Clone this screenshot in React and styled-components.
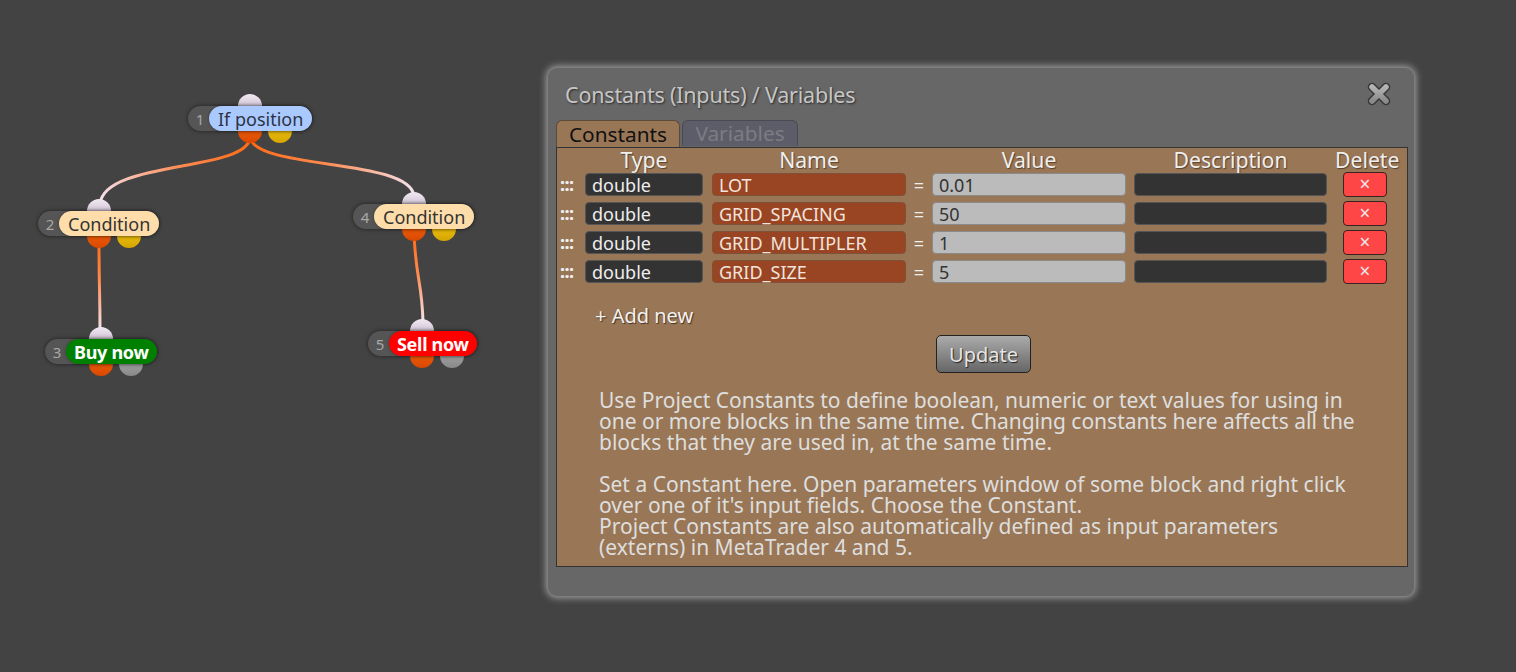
import React from "react";
import styled, { createGlobalStyle } from "styled-components";

const Global = createGlobalStyle`
  html, body { margin: 0; padding: 0; background: #434343; }
  body { font-family: "Noto Sans", "Open Sans", sans-serif; }
  * { box-sizing: border-box; }
`;

const Page = styled.div`
  display: flex;
  width: 1516px;
  height: 672px;
  overflow: hidden;
  background: #434343;
`;

/* ---------- node graph ---------- */
const Canvas = styled.div`
  position: relative;
  flex: 0 0 548px;
  height: 672px;
`;

const Edges = styled.svg`
  position: absolute;
  left: 0;
  top: 0;
  width: 548px;
  height: 672px;
`;

const NodeWrap = styled.div`
  position: absolute;
  left: ${(p) => p.$x}px;
  top: ${(p) => p.$y}px;
  height: 25px;
`;

const Pill = styled.div`
  position: relative;
  z-index: 2;
  display: flex;
  align-items: stretch;
  height: 25px;
  background: #555;
  border-radius: 13px;
  box-shadow: 0 0 4px rgba(0, 0, 0, 0.55);
`;

const Num = styled.span`
  width: 21px;
  padding-left: 3px;
  display: flex;
  align-items: center;
  justify-content: center;
  font-size: 15px;
  color: #a8a8a8;
`;

const Label = styled.span`
  display: flex;
  align-items: center;
  padding: 0 ${(p) => (p.$bold ? 8 : 9)}px;
  border-radius: 13px;
  background: ${(p) => p.$bg};
  color: ${(p) => p.$fg};
  font-size: 18px;
  font-weight: ${(p) => (p.$bold ? 700 : 400)};
  letter-spacing: ${(p) => (p.$bold ? "-0.3px" : "0")};
  white-space: nowrap;
  box-shadow: 0 0 3px rgba(0, 0, 0, 0.35);
`;

const Port = styled.span`
  position: absolute;
  z-index: 1;
  width: 24px;
  height: 24px;
  border-radius: 50%;
  left: calc(50% - 12px + ${(p) => p.$dx}px);
  top: ${(p) => (p.$top ? -12 : 13)}px;
  background: ${(p) => p.$bg};
`;

const portColors = {
  in: "linear-gradient(#f2e8f2, #b4a4bc)",
  orange: "linear-gradient(#ff6a10, #d84800)",
  yellow: "linear-gradient(#ffd21a, #d4a400)",
  gray: "linear-gradient(#b6b6b6, #888)",
};

const nodes = [
  { n: 1, label: "If position", x: 188, y: 106, bg: "#a9c9ff", fg: "#2c3344", second: "yellow" },
  { n: 2, label: "Condition", x: 38, y: 211, bg: "#ffddaa", fg: "#333", second: "yellow" },
  { n: 3, label: "Buy now", x: 45, y: 339, bg: "#008000", fg: "#fff", bold: true, second: "gray" },
  { n: 4, label: "Condition", x: 353, y: 204, bg: "#ffddaa", fg: "#333", second: "yellow" },
  { n: 5, label: "Sell now", x: 368, y: 331, bg: "#ff0000", fg: "#fff", bold: true, second: "gray" },
];

const edges = [
  { id: "e12", d: "M250 138 C246 172 104 160 100 204", x1: 250, y1: 138, x2: 100, y2: 204 },
  { id: "e14", d: "M250 138 C258 170 410 158 414 196", x1: 250, y1: 138, x2: 414, y2: 196 },
  { id: "e23", d: "M99 240 C99 290 100 290 100 330", x1: 99, y1: 240, x2: 100, y2: 330 },
  { id: "e45", d: "M414 234 C416 280 422 282 423 322", x1: 414, y1: 234, x2: 423, y2: 322 },
];

function GraphNode({ node }) {
  return (
    <NodeWrap $x={node.x} $y={node.y}>
      <Port $top $dx={0} $bg={portColors.in} />
      <Port $dx={0} $bg={portColors.orange} />
      <Port $dx={30} $bg={portColors[node.second]} />
      <Pill>
        <Num>{node.n}</Num>
        <Label $bg={node.bg} $fg={node.fg} $bold={node.bold}>
          {node.label}
        </Label>
      </Pill>
    </NodeWrap>
  );
}

/* ---------- dialog ---------- */
const DialogCol = styled.div`
  padding-top: 68px;
`;

const Dialog = styled.div`
  width: 866px;
  height: 528px;
  background: #676767;
  border-radius: 9px;
  padding: 0 6px 0 8px;
  display: flex;
  flex-direction: column;
  box-shadow: 0 0 7px 2px rgba(235, 235, 235, 0.55);
`;

const TitleBar = styled.div`
  height: 52px;
  flex: 0 0 52px;
  display: flex;
  align-items: center;
  justify-content: space-between;
  padding: 0 16px 0 9px;
`;

const Title = styled.div`
  font-size: 21.5px;
  color: #c6c6c6;
  text-shadow: 1px 1px 2px #2a2a2a;
  letter-spacing: -0.2px;
`;

const CloseBtn = styled.button`
  width: 26px;
  height: 26px;
  padding: 0;
  border: 0;
  background: none;
  display: flex;
  align-items: center;
  justify-content: center;
  cursor: pointer;
`;

const Tabs = styled.div`
  display: flex;
  gap: 2px;
  height: 27px;
  flex: 0 0 27px;
  align-items: flex-end;
`;

const Tab = styled.div`
  width: ${(p) => p.$w}px;
  height: ${(p) => (p.$active ? 27 : 26)}px;
  display: flex;
  align-items: center;
  justify-content: center;
  border-radius: 6px 6px 0 0;
  border: 1px solid ${(p) => (p.$active ? "#5a4a3a" : "#4a4a52")};
  border-bottom: 0;
  background: ${(p) => (p.$active ? "#997756" : "#5d5d69")};
  color: ${(p) => (p.$active ? "#111" : "#7c7c82")};
  font-size: 20.8px;
  line-height: 1;
  margin-bottom: ${(p) => (p.$active ? 0 : 1)}px;
`;

const Panel = styled.div`
  height: 420px;
  flex: 0 0 420px;
  background: #997756;
  border: 1px solid #333;
  padding-left: 3px;
  display: flex;
  flex-direction: column;
`;

const Row = styled.div`
  display: flex;
  align-items: center;
  height: ${(p) => (p.$head ? 24 : 25)}px;
  margin-bottom: ${(p) => (p.$head ? 0 : 4)}px;
`;

const HeadCell = styled.div`
  width: ${(p) => p.$w}px;
  margin-left: ${(p) => p.$ml || 0}px;
  text-align: center;
  font-size: 21.2px;
  line-height: 22px;
  color: #efefef;
  white-space: nowrap;
  text-shadow: 1px 1px 1px rgba(40, 30, 20, 0.6);
`;

const Handle = styled.div`
  width: 25px;
  color: #f0f0f0;
  font-size: 18px;
  font-weight: 700;
  letter-spacing: -0.5px;
  line-height: 25px;
`;

const Field = styled.div`
  width: ${(p) => p.$w}px;
  margin-left: ${(p) => p.$ml || 0}px;
  height: 23px;
  border-radius: 4px;
  padding-left: 6px;
  display: flex;
  align-items: center;
  font-size: 18px;
  background: ${(p) => p.$bg};
  color: ${(p) => p.$fg};
  border: 1px solid ${(p) => p.$bd};
  white-space: nowrap;
`;

const Eq = styled.div`
  width: 26px;
  text-align: center;
  color: #eee;
  font-size: 18px;
`;

const DelCell = styled.div`
  width: 60px;
  margin-left: 8px;
  display: flex;
  justify-content: center;
`;

const DelBtn = styled.button`
  width: 44px;
  height: 25px;
  padding: 0;
  border: 1px solid #3a2222;
  border-radius: 4px;
  background: #ff4646;
  color: #e8e8e8;
  font-size: 19px;
  line-height: 1;
  font-family: inherit;
  display: flex;
  align-items: center;
  justify-content: center;
`;

const AddNew = styled.div`
  margin-top: 16px;
  padding-left: 35px;
  font-size: 20px;
  line-height: 24px;
  color: #f2f2f2;
  text-shadow: 1px 1px 1px rgba(30, 20, 10, 0.7);
`;

const UpdateWrap = styled.div`
  display: flex;
  justify-content: center;
  margin-top: 7px;
`;

const UpdateBtn = styled.button`
  width: 95px;
  height: 38px;
  border: 1px solid #222;
  border-radius: 5px;
  background: linear-gradient(#ababab, #666);
  color: #e6e6e6;
  font-family: inherit;
  font-size: 20px;
  text-shadow: 1px 1px 1px #222;
  padding: 0;
`;

const Help = styled.div`
  margin-top: 17px;
  padding-left: 39px;
  width: 801px;
  font-size: 21px;
  line-height: 21px;
  color: #dedede;
`;

const HelpPara = styled.p`
  margin: 0 0 21px;
  &:last-child { margin-bottom: 0; }
`;

const rows = [
  { name: "LOT", value: "0.01" },
  { name: "GRID_SPACING", value: "50" },
  { name: "GRID_MULTIPLER", value: "1" },
  { name: "GRID_SIZE", value: "5" },
];

function CloseIcon() {
  return (
    <svg width="26" height="26" viewBox="0 0 26 26">
      <defs>
        <linearGradient id="cx" x1="0" y1="0" x2="0" y2="1">
          <stop offset="0" stopColor="#b4b4b4" />
          <stop offset="1" stopColor="#8a8a8a" />
        </linearGradient>
      </defs>
      <g strokeLinecap="round">
        <path d="M6 6 L20 20 M20 6 L6 20" stroke="#383838" strokeWidth="8.5" />
        <path d="M6 6 L20 20 M20 6 L6 20" stroke="url(#cx)" strokeWidth="5.5" />
      </g>
    </svg>
  );
}

export default function App() {
  return (
    <Page>
      <Global />
      <Canvas>
        <Edges viewBox="0 0 548 672">
          <defs>
            {edges.map((e) => (
              <linearGradient
                key={e.id}
                id={e.id}
                gradientUnits="userSpaceOnUse"
                x1={e.x1}
                y1={e.y1}
                x2={e.x2}
                y2={e.y2}
              >
                <stop offset="0" stopColor="#ff6a14" />
                <stop offset="0.45" stopColor="#ff8a50" />
                <stop offset="1" stopColor="#f4e4ee" />
              </linearGradient>
            ))}
          </defs>
          {edges.map((e) => (
            <path key={e.id} d={e.d} fill="none" stroke={`url(#${e.id})`} strokeWidth="3" />
          ))}
        </Edges>
        {nodes.map((n) => (
          <GraphNode key={n.n} node={n} />
        ))}
      </Canvas>

      <DialogCol>
        <Dialog>
          <TitleBar>
            <Title>Constants (Inputs) / Variables</Title>
            <CloseBtn aria-label="Close">
              <CloseIcon />
            </CloseBtn>
          </TitleBar>
          <Tabs>
            <Tab $active $w={124}>Constants</Tab>
            <Tab $w={116}>Variables</Tab>
          </Tabs>
          <Panel>
            <Row $head>
              <HeadCell $w={25} />
              <HeadCell $w={118}>Type</HeadCell>
              <HeadCell $w={194} $ml={9}>Name</HeadCell>
              <HeadCell $w={26} />
              <HeadCell $w={194}>Value</HeadCell>
              <HeadCell $w={193} $ml={8}>Description</HeadCell>
              <HeadCell $w={60} $ml={8}>Delete</HeadCell>
            </Row>
            {rows.map((r) => (
              <Row key={r.name}>
                <Handle>:::</Handle>
                <Field $w={118} $bg="#333" $fg="#eee" $bd="#555">double</Field>
                <Field $w={194} $ml={9} $bg="#994422" $fg="#f2e4dc" $bd="#7e5238">{r.name}</Field>
                <Eq>=</Eq>
                <Field $w={194} $bg="#bbb" $fg="#333" $bd="#8a8a8a">{r.value}</Field>
                <Field $w={193} $ml={8} $bg="#333" $fg="#eee" $bd="#555" />
                <DelCell>
                  <DelBtn aria-label="Delete">×</DelBtn>
                </DelCell>
              </Row>
            ))}
            <AddNew>+ Add new</AddNew>
            <UpdateWrap>
              <UpdateBtn>Update</UpdateBtn>
            </UpdateWrap>
            <Help>
              <HelpPara>
                Use Project Constants to define boolean, numeric or text values for using in one or
                more blocks in the same time. Changing constants here affects all the blocks that
                they are used in, at the same time.
              </HelpPara>
              <HelpPara>
                Set a Constant here. Open parameters window of some block and right click over one of
                it's input fields. Choose the Constant.
                <br />
                Project Constants are also automatically defined as input parameters (externs) in
                MetaTrader 4 and 5.
              </HelpPara>
            </Help>
          </Panel>
        </Dialog>
      </DialogCol>
    </Page>
  );
}
